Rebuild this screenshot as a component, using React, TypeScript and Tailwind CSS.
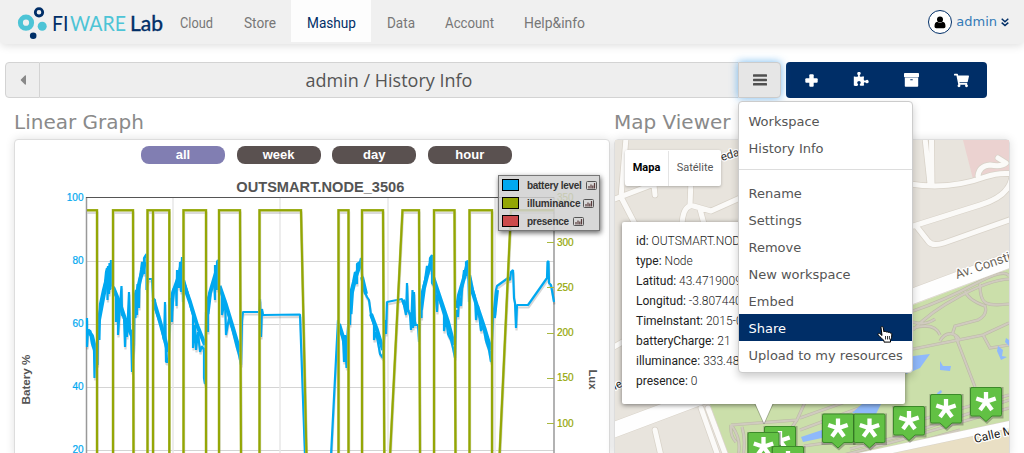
import React from "react";
import { FaCaretLeft, FaShoppingCart } from "react-icons/fa";

const NAV = [
  { label: "Cloud", cell: "w-[63px]", text: 33 },
  { label: "Store", cell: "w-[63px]", text: 32 },
  { label: "Mashup", cell: "w-[80px]", text: 49, active: true },
  { label: "Data", cell: "w-[59px]", text: 28 },
  { label: "Account", cell: "w-[79px]", text: 49 },
  { label: "Help&info", cell: "w-[90px]", text: 61 },
];

function Logo() {
  return (
    <svg width="148" height="36" viewBox="16 5 148 36" className="ml-4 mt-[5px] shrink-0 font-['Lato',sans-serif]">
      <circle cx="26" cy="22.7" r="5.6" fill="none" stroke="#4dc4d6" strokeWidth="5" />
      <circle cx="39" cy="12.3" r="3.7" fill="none" stroke="#002e67" strokeWidth="2.8" />
      <circle cx="42.2" cy="26.3" r="4.5" fill="#4dc4d6" />
      <circle cx="33.2" cy="35.8" r="3.3" fill="#002e67" />
      <text x="52" y="31" fontSize="22" fill="#002e67" textLength="16.500" lengthAdjust="spacingAndGlyphs">FI</text>
      <text x="70" y="31" fontSize="22" fill="#4dc4d6" textLength="56" lengthAdjust="spacingAndGlyphs">WARE</text>
      <text x="130" y="31" fontSize="22" fill="#002e67" stroke="#002e67" strokeWidth=".4" textLength="33" lengthAdjust="spacingAndGlyphs">Lab</text>
    </svg>
  );
}

function UserIcon() {
  return (
    <svg width="12" height="13" viewBox="0 0 12 13">
      <circle cx="6" cy="3.500" r="3" />
      <path d="M.5 10.500C.5 7.500 1.500 6 3.200 5.800Q6 8 8.800 5.800C10.500 6 11.500 7.500 11.500 10.500Q11.500 12.300 9.800 12.300H2.200Q.5 12.300 .5 10.500Z" />
    </svg>
  );
}

function Header() {
  return (
    <header className="flex h-[44px] shrink-0 rounded-b-[5px] bg-[#f0f0f0] shadow-[0_2px_8px_rgba(0,0,0,0.13)]">
      <Logo />
      <nav className="ml-px flex h-[42px]">
        {NAV.map((n) => (
          <a key={n.label} className={`flex items-center justify-center ${n.cell} ${n.active ? "bg-[#fdfdfd]" : ""}`}>
            <svg width={n.text} height="22" className="overflow-visible font-['Roboto',sans-serif]">
              <text x="0" y="18" fontSize="15" fill={n.active ? "#002e67" : "#777"} textLength={n.text} lengthAdjust="spacingAndGlyphs">
                {n.label}
              </text>
            </svg>
          </a>
        ))}
      </nav>
      <div className="ml-auto mr-[15px] flex items-center text-[#337ab7]">
        <span className="flex size-[24px] items-center justify-center rounded-full border border-[#002e67] bg-white text-black">
          <UserIcon />
        </span>
        <span className="ml-[4px] font-['DejaVu_Sans',sans-serif] text-[13px]">admin</span>
        <svg width="8" height="9" viewBox="0 0 8 9" className="ml-[4px] mt-px">
          <path d="M.7 .8L4 3.800L7.300 .8M.7 4.600L4 7.600L7.300 4.600" fill="none" stroke="#002e67" strokeWidth="1.500" />
        </svg>
      </div>
    </header>
  );
}

function PuzzleIcon() {
  return (
    <svg viewBox="0 0 1792 1792" className="size-[16px]" fill="currentColor">
      <path d="M1755 1082q0 81-44.5 135t-123.500 54q-41 0-77.500-17.500t-59-38-56.500-38-71-17.500q-110 0-110 124 0 39 16 115t15 115v5q-22 0-33 1-34 3-97.500 11.500t-115.500 13.500-98 5q-61 0-103-26.500t-42-83.500q0-37 17.500-71t38-56.500 38-59 17.500-77.500q0-79-54-123.500t-135-44.500q-84 0-143 45.500t-59 127.500q0 43 15 83t33.500 64.500 33.500 53 15 50.500q0 45-46 89-37 35-117 35-95 0-245-24-9-2-27.500-4t-27.500-4l-13-2q-1 0-3-1-2 0-2-1v-1024q2 1 17.500 3.500t34 5 21.500 3.500q150 24 245 24 80 0 117-35 46-44 46-89 0-22-15-50.500t-33.500-53-33.500-64.500-15-83q0-82 59-127.500t144-45.500q80 0 134 44.500t54 123.500q0 41-17.500 77.500t-38 59-38 56.500-17.500 71q0 57 42 83.500t103 26.500q64 0 180-15t163-17v2q-1 2-3.500 17.500t-5 34-3.500 21.500q-24 150-24 245 0 80 35 117 44 46 89 46 22 0 50.500-15t53-33.500 64.500-33.500 83-15q82 0 127.500 59t45.500 143z" />
    </svg>
  );
}

function PlusIcon() {
  return (
    <svg width="13" height="13" viewBox="0 0 13 13" fill="currentColor">
      <rect x="4.300" y=".3" width="4.400" height="12.400" rx="1" />
      <rect x=".3" y="4.300" width="12.400" height="4.400" rx="1" />
    </svg>
  );
}

function ArchiveIcon() {
  return (
    <svg width="15" height="14" viewBox="0 0 15 14" fill="currentColor">
      <rect x="0" y="0" width="15" height="4.200" rx=".7" />
      <path fillRule="evenodd" d="M.8 4.600H14.200V13Q14.200 13.800 13.400 13.800H1.600Q.8 13.800 .8 13ZM6.300 6.300V7.200H8.700V6.300Z" />
    </svg>
  );
}

function BarsIcon() {
  return (
    <svg width="14" height="12" viewBox="0 0 14 12" fill="currentColor">
      <rect x="0" y=".3" width="14" height="2.500" rx=".6" />
      <rect x="0" y="4.700" width="14" height="2.500" rx=".6" />
      <rect x="0" y="9.100" width="14" height="2.500" rx=".6" />
    </svg>
  );
}

function Cursor() {
  return (
    <svg width="16" height="17" viewBox="0 0 16 17" className="absolute left-[138px] top-[12px]">
      <path
        d="M4 1.500c0-1.300 2-1.300 2.200 0L7 6c.3-1 2-.8 2.200.2.400-.8 1.800-.6 2 .4.500-.8 1.900-.4 2 .6.800-.5 1.600 0 1.600.9 0 3-.3 4-1.300 6v2H7v-1.500C5.500 13 3.500 11.500 1.300 9c-1-1.300.4-2.200 1.700-1.300L5 9.500z"
        fill="#fff"
        stroke="#000"
        strokeWidth="1"
      />
      <path d="M8.500 10v3.500M10.500 10v3.500M12.400 10v3.500" stroke="#000" strokeWidth=".8" />
    </svg>
  );
}

function MenuItem({ label, active }: { label: string; active?: boolean }) {
  return (
    <div className={`relative flex h-[27px] items-center pl-[9.5px] pt-[2px] ${active ? "bg-[#002e67] text-white" : "text-[#555]"}`}>
      <span className="whitespace-nowrap">{label}</span>
      {active && <Cursor />}
    </div>
  );
}

function Menu() {
  return (
    <div className="absolute left-0 top-[39px] z-20 h-[272px] w-[175px] rounded-[4px] border border-[#ccc] bg-white pt-[5px] font-['DejaVu_Sans',sans-serif] text-[13px] shadow-[0_4px_8px_rgba(0,0,0,0.2)]">
      <MenuItem label="Workspace" />
      <MenuItem label="History Info" />
      <div className="mb-[9px] mt-[8px] h-px bg-[#ddd]" />
      <MenuItem label="Rename" />
      <MenuItem label="Settings" />
      <MenuItem label="Remove" />
      <MenuItem label="New workspace" />
      <MenuItem label="Embed" />
      <MenuItem label="Share" active />
      <MenuItem label="Upload to my resources" />
    </div>
  );
}

function Toolbar() {
  return (
    <div className="ml-[5px] mt-[18px] flex h-[36px] shrink-0">
      <div className="flex w-[35px] items-center justify-center rounded-l-[4px] border border-[#d3d3d3] bg-[#eee] text-[#888]">
        <FaCaretLeft className="size-[16px]" />
      </div>
      <div className="flex w-[698px] items-center justify-center border-y border-[#d3d3d3] bg-[#eee] font-['Open_Sans',sans-serif] text-[18px] text-[#555]">
        admin / History Info
      </div>
      <div className="relative w-[43px]">
        <div className="flex h-full items-center justify-center rounded-r-[4px] border border-[#ccc] bg-[#e6e6e6] text-[#505050] shadow-[0_0_8px_rgba(82,168,236,0.8)]">
          <BarsIcon />
        </div>
        <Menu />
      </div>
      <div className="ml-[5px] grid w-[201px] grid-cols-4 items-center justify-items-center rounded-[4px] bg-[#002e67] text-white">
        <PlusIcon />
        <PuzzleIcon />
        <ArchiveIcon />
        <FaShoppingCart className="size-[15px]" />
      </div>
    </div>
  );
}

const BATTERY =
  "87,318 87,347 88,330 90.500,331 91,338 92,344 94,350 94.500,378 95.500,350 97.500,365 98,330 99,318 100,304 103,290 105,282 106,272 107,268 107.500,300 108,266 109,294 109.500,263 110,290 111,260 112,285 114,290 116,296 116,322 118,302 118,335 120,306 121.500,286 122,315 124,317 125,347 126,318 127,337 129,292 130,332 131,330 132,372 134,345 134.500,296 136,290 137,315 137.500,284 139,308 139.500,280 141,270 142,262 144,274 144,258 146.500,254 146.500,290 148,279 152,279 153,298 155,300 155,308 158,317 161,325 164,340 165,302 166,362 168,362 169,340 171,298 172,322 173,290 176,285 176.500,306 177,270 179,288 180,262 181,292 182,257 183,302 184,280 188,294 191,308 193,315 193,348 195,325 196,350 198,332 200,352 202,346 204,350 204,378 205,384 206,312 208,332 208,298 210,293 214,280 215,300 215,265 217,290 217,262 218,260 218.500,286 222,292 222,315 225,300 226,335 229,318 233,332 237,348 239,355 241,365 242,320 243,312 259,312 260,299 261,337 262,309 263,315 300,314.500 305,456 331,456 338,320 340,330 343,337 344,362 345,335 346.500,368 347,340 348.500,320 350,325 351,290 353,282 355,272 357,284 357,264 360,262 361,258 362,275 364,290 367,297 369,300 371,315 374,325 374,340 376,332 379,348 380,354 383,358 385,320 386,334 387,302 402,299 404,305 406,315 407,283 408,310 410,315 411,330 412.500,290 413,328 414,292 415,325 418,325 419,342 420,310 421.500,318 422,292 425,280 427,266 429,272 430,258 432,255 432,283 435,287 437,312 438,293 441,305 444,315 444,331 446,318 448,334 451,340 453,348 455,358 456,310 458,317 459,297 461,306 462,290 464,270 466,276 466,262 468,261 469,302 470,275 473,290 475,297 476,320 478,306 481,331 483,325 486,341 489,350 491,362 493,315 495,312 496,290 497,286 508,278 510,280 511,272 513,270 514,298 515,303 516,328 517,305 528,305 540,288 547,278 547.500,262 548.500,261 549,283 551,285 554,302";

const BATTERY_TREND =
  "M87.500 330L92 336L96 352M98.500 340L99 320L102 304L106 283L110.500 266M113 287L120 304L126 322L132 336M134.500 318L136 298L140 280L145 262M153.500 300L159 318L164 336L168 352M171 312L173 293L179 276L182 262M184 285L190 302L197 325L205 345M207.500 314L210 293L215 276L218 266M219.500 286L226 305L233 328L240 352M339 324L343 337L346 350M350.500 314L352 292L356 276L360.500 263M362 277L366 294M371 314L377 330L383 350M403 300L408 312M412 312L415 326M421 310L424 288L428 272L432 260M433 277L440 298L448 322L454 345M457 308L459 295L464 278L467.500 264M470 284L477 306L485 330L491 350M494 318L497 290";

const LUX =
  "M87 210.300H97V456M113 456V210.300H133L133.500 456M147.500 456V210.300H169.300V456M153 210V456M183.500 456V210.300H206V456M219 456V210.300H240L241 456M259.500 456V210.300H301L306.500 456M338.500 456V210.300H348.500V456M362 456V210.300H383L384.300 456M390 456L402.500 210.300H419L420 456M434 456V210.300H454.500L455.500 456M469.500 456V210.300H492V456M499.500 456L511 210.300H554";

function Chart() {
  return (
    <svg
      width="594"
      height="315"
      viewBox="15 140 594 315"
      className="block font-['Liberation_Sans',sans-serif]"
    >
      <g fill="none" strokeWidth="1">
        <path d="M87 261.500H554M87 324.500H554M87 387.500H554M87 450.500H554" stroke="#d4d4d4" />
        <path d="M173 198V456M280 198V456M388 198V456M495 198V456" stroke="#e8e8e8" strokeWidth="1.500" />
        <path d="M86.500 197V456M554 197V456" stroke="#999" strokeWidth="1.500" />
        <path d="M86 197.500H554" stroke="#555" />
      </g>
      <g fill="none" strokeLinejoin="bevel">
        <polyline points={BATTERY} transform="translate(.5 2.5)" stroke="#000" strokeOpacity=".16" strokeWidth="2.200" />
        <path d={BATTERY_TREND} stroke="#00a8f0" strokeWidth="4" />
        <polyline points={BATTERY} stroke="#00a8f0" strokeWidth="2.200" />
      </g>
      <g fill="none">
        <path d={LUX} transform="translate(.5 2.5)" stroke="#000" strokeOpacity=".14" strokeWidth="2.500" />
        <path d={LUX} stroke="#b8c45c" strokeWidth="2.600" />
        <path d={LUX} stroke="#93a604" strokeWidth="1.900" />
        <path d="M547 242.500H554M547 287.500H554M547 333.500H554M547 378.500H554M547 423.500H554" stroke="#a9b83e" />
      </g>
      <text x="320.300" y="192" fontSize="15" fontWeight="bold" fill="#545454" textAnchor="middle" textLength="168" lengthAdjust="spacingAndGlyphs">
        OUTSMART.NODE_3506
      </text>
      <g fontSize="10" fill="#00a8f0" stroke="#00a8f0" strokeWidth=".2" textAnchor="end">
        <text x="83.500" y="200.500">100</text>
        <text x="83.500" y="263.500">80</text>
        <text x="83.500" y="327">60</text>
        <text x="83.500" y="390">40</text>
        <text x="83.500" y="453">20</text>
      </g>
      <g fontSize="10" fill="#93a604" stroke="#93a604" strokeWidth=".2">
        <text x="557" y="200.500">350</text>
        <text x="557" y="245.500">300</text>
        <text x="557" y="290.500">250</text>
        <text x="557" y="336">200</text>
        <text x="557" y="381">150</text>
        <text x="557" y="426.500">100</text>
      </g>
      <g fontWeight="bold" fill="#545454" textAnchor="middle">
        <text transform="translate(29.500 379.500) rotate(-90)" fontSize="11.500" textLength="50" lengthAdjust="spacingAndGlyphs">Batery %</text>
        <text transform="translate(589 379.500) rotate(90)" fontSize="11" textLength="20" lengthAdjust="spacingAndGlyphs">Lux</text>
      </g>
    </svg>
  );
}

function BarsGlyph() {
  return (
    <svg width="11" height="9" viewBox="0 0 11 9" className="shrink-0">
      <rect x=".5" y=".5" width="10" height="8" rx="1" fill="none" stroke="#555" />
      <path d="M3 7.500V5M5 7.500V3.500M6.800 7.500V4.500M8.500 7.500V2" stroke="#5a3c3c" strokeWidth="1.200" />
    </svg>
  );
}

function LegendRow({ swatch, label, width }: { swatch: string; label: string; width: string }) {
  return (
    <div className="flex h-[18px] items-center">
      <span className={`h-[12px] w-[17px] shrink-0 border border-black ${swatch}`} />
      <span className={`ml-[8px] mr-[4px] shrink-0 whitespace-nowrap ${width}`}>{label}</span>
      <BarsGlyph />
    </div>
  );
}

function RangeButton({ label, active }: { label: string; active?: boolean }) {
  return (
    <div className={`flex h-[18px] w-[84px] items-center justify-center rounded-[8px] text-[13px] font-bold text-white ${active ? "bg-[#817eb2]" : "bg-[#5a5150]"}`}>
      {label}
    </div>
  );
}

function LinearGraph() {
  return (
    <section className="ml-[14px] w-[596px]">
      <h2 className="h-[32px] pt-px font-['DejaVu_Sans',sans-serif] text-[20px] leading-[32px] text-[#8a8a8a]">Linear Graph</h2>
      <div className="relative mt-[2px] rounded-t-[4px] border border-[#ddd] bg-white shadow-[0_0_10px_rgba(0,0,0,0.12)]">
        <Chart />
        <div className="absolute left-[126px] top-[6px] flex gap-[11.6px] font-['Liberation_Sans',sans-serif]">
          <RangeButton label="all" active />
          <RangeButton label="week" />
          <RangeButton label="day" />
          <RangeButton label="hour" />
        </div>
        <div className="absolute left-[483px] top-[35px] h-[56px] w-[102px] border border-[#777] bg-[#d0d0d0]/85 pl-[3px] font-['Liberation_Sans',sans-serif] text-[10px] font-bold text-[#333] shadow-[1px_2px_5px_rgba(0,0,0,0.6)]">
          <LegendRow swatch="bg-[#00a8f0]" label="battery level" width="w-[55px] tracking-[-0.3px]" />
          <LegendRow swatch="bg-[#93a604]" label="illuminance" width="w-[52px] tracking-[-0.15px]" />
          <LegendRow swatch="bg-[#cb4b4b]" label="presence" width="w-[42px] tracking-[-0.25px]" />
        </div>
      </div>
    </section>
  );
}

const PINS = [
  [780, 426],
  [763.5, 432],
  [788, 446],
  [838, 413.5],
  [869.5, 413.5],
  [909, 406],
  [946, 394],
  [986, 387],
];

function Pin({ x, y }: { x: number; y: number }) {
  return (
    <g transform={`translate(${x} ${y})`}>
      <path d="M-16.500 0H17.500V31.500H7L1 37-6 31.500H-16.500Z" fill="#000" opacity=".25" />
      <path d="M-14 .5H14Q15.500 .5 15.500 2V27.500Q15.500 29 14 29H6L0 34.500-6 29H-14Q-15.500 29-15.500 27.500V2Q-15.500 .5-14 .5Z" fill="#62c144" stroke="#3c8a2a" />
      <path d="M0 14.800V5M0 14.800L-9.700 11.500M0 14.800L9.700 11.500M0 14.800L-6 23M0 14.800L6 23" stroke="#fff" strokeWidth="4.300" />
    </g>
  );
}

const MINOR =
  "M626 138L621 197L636 226M612 200L662 181M654 185L655 195M691 180L690 205L711 211L740 198M690 206Q683 208 682 224M700 209L704 224M612 348L626 340M655 430L661 456M701 408L718 456M708 408L726 456M925 138L930 184M931.500 138L932 184M910 184Q950 190 985 177Q1000 172 1012 174M978 176Q979 166 990 165Q1002 167 1006 163L998 158M1012 176Q1010 196 980 205L910 227M917 227L928 241Q932 247 944 243L1012 219";

const TRAILS =
  "M913 330Q930 312 960 296T1009 279M913 311Q945 300 975 284T1009 276M913 322Q925 326 935 319M980 284Q980 300 986 303T1009 304M965 291Q968 300 985 306Q988 315 978 320L955 326L952 335M913 328Q935 322 940 335M913 349L983 335L1009 323M983 335L990 348L1009 345M955 335L975 387M940 341Q945 332 953 334Q961 338 958 341M800 418L845 402M800 430L870 404M840 456L900 440L1009 408M850 449L905 435L1009 400M890 450L960 430M913 422L1009 395M731 425L797 420M732 426Q742 440 738 456M731 425Q730 436 736 442M742 427Q746 440 743 456M797 420L806 400M797 420L790 430M804 446L840 441";

function MapCanvas() {
  return (
    <svg width="394" height="315" viewBox="615 140 394 315" className="block font-['Roboto',sans-serif]">
      <rect x="615" y="140" width="394" height="315" fill="#e8e4dd" />
      <path d="M963 140H1009V172L973 179Z" fill="#ebd2d0" />
      <path d="M913 305L1009 269V422L860 456H729L709 402L800 340Z" fill="#cbdfaa" />
      <g fill="none">
        <path d={TRAILS} stroke="#bcb9a6" strokeWidth="3.200" />
        <path d={TRAILS} stroke="#d0cbbf" strokeWidth="2" />
      </g>
      <g fill="#8fb9fb">
        <path d="M905 357L930 354L920 368L906 374ZM940 361L943 366L951 366L950 371L940 370ZM852 413L862 404H881L876 414ZM801 437L822 430V438L803 442ZM998 346L1003 350L1002 356L1007 357L1001 360L997 351ZM1006 338L1009 340V346L1005 342ZM937 393L941 390L942 392L938 396Z" />
      </g>
      <g fill="none" strokeLinejoin="round" strokeLinecap="round">
        <path d={MINOR} stroke="#d8d2c8" strokeWidth="6.500" />
        <path d="M608 432L712 393M905 299L1015 258" stroke="#d8d2c8" strokeWidth="16" />
        <path d={MINOR} stroke="#fbfaf8" strokeWidth="5" />
        <path d="M608 432L712 393M905 299L1015 258" stroke="#fefefe" strokeWidth="15" />
      </g>
      <path d="M840 465L1012 427V456H840Z" fill="#e9dfc4" />
      <path d="M850 458.500L1012 424" stroke="#d8d2c8" strokeWidth="8" />
      <path d="M850 458.500L1012 424" stroke="#fefefe" strokeWidth="7" />
      <g fill="#6b655a" stroke="#fff" strokeWidth="2.500" paintOrder="stroke" strokeLinejoin="round">
        <text transform="translate(957 279) rotate(-19)" fontSize="13">Av. Constit</text>
        <text transform="translate(722 161) rotate(-17)" fontSize="11.500" fill="#333">eda</text>
        <text transform="translate(975 443) rotate(-13)" fontSize="12" fill="#222">Calle Ma</text>
        <text transform="translate(615 390) rotate(-25)" fontSize="11" fill="#222">ie</text>
      </g>
      {PINS.map(([x, y]) => (
        <Pin key={`${x}-${y}`} x={x} y={y} />
      ))}
    </svg>
  );
}

const INFO = [
  ["id:", "OUTSMART.NODE_3506"],
  ["type:", "Node"],
  ["Latitud:", "43.47190093"],
  ["Longitud:", "-3.80744043"],
  ["TimeInstant:", "2015-06-10"],
  ["batteryCharge:", "21"],
  ["illuminance:", "333.48"],
  ["presence:", "0"],
];

function MapViewer() {
  return (
    <section className="ml-[4px] w-[396px]">
      <h2 className="h-[32px] pt-px font-['DejaVu_Sans',sans-serif] text-[20px] leading-[32px] text-[#8a8a8a]">Map Viewer</h2>
      <div className="relative mt-[2px] rounded-t-[4px] border border-[#ddd] shadow-[0_0_10px_rgba(0,0,0,0.12)]">
        <MapCanvas />
        <div className="absolute left-[10px] top-[10px] flex h-[36px] rounded-[2px] bg-white pt-px font-['Roboto',sans-serif] text-[11px] shadow-[0_1px_3px_rgba(0,0,0,0.25)]">
          <div className="flex w-[44px] items-center justify-center border-r border-[#e4e4e4] font-bold text-black">Mapa</div>
          <div className="flex w-[52px] items-center justify-center text-[#565656]">Satélite</div>
        </div>
        <div className="absolute left-[7px] top-[82px] h-[182px] w-[283px] overflow-hidden rounded-[2px] bg-white pl-[14px] pt-[9px] font-['Roboto',sans-serif] text-[12px] text-[#222] shadow-[0_1px_5px_rgba(0,0,0,0.5)]">
          {INFO.map(([k, v]) => (
            <div key={k} className="h-[20px] whitespace-nowrap leading-[20px]">
              {k} <span className="font-light">{v}</span>
            </div>
          ))}
        </div>
        <svg width="20" height="22" viewBox="0 0 20 22" className="absolute left-[139px] top-[263px]">
          <path d="M1 0L10 21L19 0Z" fill="#fff" />
          <path d="M1 1L10 21L19 1" fill="none" stroke="#000" strokeOpacity=".25" />
        </svg>
      </div>
    </section>
  );
}

export default function App() {
  return (
    <div className="flex h-[453px] w-[1024px] flex-col overflow-hidden bg-white">
      <Header />
      <Toolbar />
      <main className="mt-[7px] flex">
        <LinearGraph />
        <MapViewer />
      </main>
    </div>
  );
}
